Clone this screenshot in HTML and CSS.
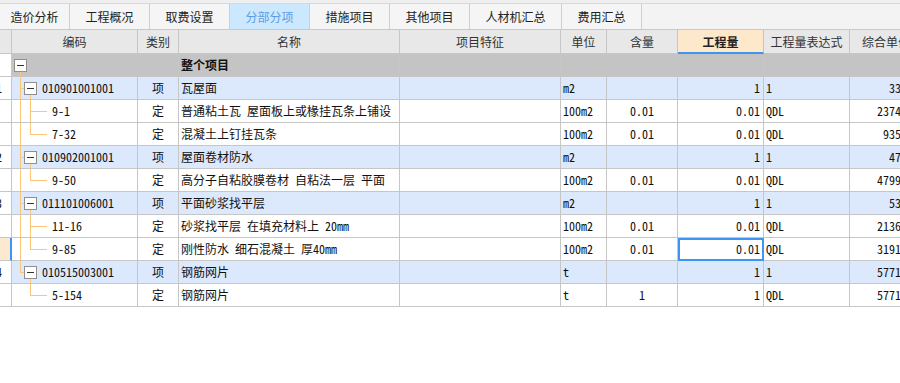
FILE: index.html
```html
<!DOCTYPE html>
<html lang="zh-CN">
<head>
    <meta charset="UTF-8">
    <title>分部分项</title>
    <link rel="stylesheet" href="styles.css">
</head>
<body>

    <!-- Tabs -->
    <div class="tabs">
        <div class="tab-strip">
            <div class="tab first">造价分析</div>
            <div class="tab">工程概况</div>
            <div class="tab">取费设置</div>
            <div class="tab active">分部分项</div>
            <div class="tab">措施项目</div>
            <div class="tab">其他项目</div>
            <div class="tab wide">人材机汇总</div>
            <div class="tab">费用汇总</div>
        </div>
    </div>

    <!-- Grid -->
    <div class="grid">
        <div class="row head">
            <div class="c idx"></div>
            <div class="c">编码</div>
            <div class="c">类别</div>
            <div class="c">名称</div>
            <div class="c">项目特征</div>
            <div class="c">单位</div>
            <div class="c">含量</div>
            <div class="c sorted">工程量</div>
            <div class="c">工程量表达式</div>
            <div class="c">综合单价</div>
        </div>

        <div class="row root">
            <div class="c idx"></div>
            <div class="c code">
                <span class="box root-box"></span>
                <span class="t-root start"></span>
            </div>
            <div class="c kind"></div>
            <div class="c name"><b>整个项目</b></div>
            <div class="c"></div>
            <div class="c"></div>
            <div class="c"></div>
            <div class="c"></div>
            <div class="c"></div>
            <div class="c"></div>
        </div>

        <div class="row item">
            <div class="c idx">1</div>
            <div class="c code">
                <span class="t-root"></span><span class="t-link"></span>
                <span class="box item-box"></span><span class="t-kid start"></span>
                <span class="txt">010901001001</span>
            </div>
            <div class="c kind">项</div>
            <div class="c name">瓦屋面</div>
            <div class="c"></div>
            <div class="c unit">m2</div>
            <div class="c qty"></div>
            <div class="c amt">1</div>
            <div class="c expr">1</div>
            <div class="c price">33.09</div>
        </div>
        <div class="row sub">
            <div class="c idx"></div>
            <div class="c code">
                <span class="t-root"></span><span class="t-kid"></span><span class="t-leaf"></span>
                <span class="txt">9-1</span>
            </div>
            <div class="c kind">定</div>
            <div class="c name">普通粘土瓦 屋面板上或椽挂瓦条上铺设</div>
            <div class="c"></div>
            <div class="c unit">100m2</div>
            <div class="c qty">0.01</div>
            <div class="c amt">0.01</div>
            <div class="c expr">QDL</div>
            <div class="c price">2374.05</div>
        </div>
        <div class="row sub">
            <div class="c idx"></div>
            <div class="c code">
                <span class="t-root"></span><span class="t-kid end"></span><span class="t-leaf"></span>
                <span class="txt">7-32</span>
            </div>
            <div class="c kind">定</div>
            <div class="c name">混凝土上钉挂瓦条</div>
            <div class="c"></div>
            <div class="c unit">100m2</div>
            <div class="c qty">0.01</div>
            <div class="c amt">0.01</div>
            <div class="c expr">QDL</div>
            <div class="c price">935.12</div>
        </div>

        <div class="row item">
            <div class="c idx">2</div>
            <div class="c code">
                <span class="t-root"></span><span class="t-link"></span>
                <span class="box item-box"></span><span class="t-kid start"></span>
                <span class="txt">010902001001</span>
            </div>
            <div class="c kind">项</div>
            <div class="c name">屋面卷材防水</div>
            <div class="c"></div>
            <div class="c unit">m2</div>
            <div class="c qty"></div>
            <div class="c amt">1</div>
            <div class="c expr">1</div>
            <div class="c price">47.99</div>
        </div>
        <div class="row sub">
            <div class="c idx"></div>
            <div class="c code">
                <span class="t-root"></span><span class="t-kid end"></span><span class="t-leaf"></span>
                <span class="txt">9-50</span>
            </div>
            <div class="c kind">定</div>
            <div class="c name">高分子自粘胶膜卷材 自粘法一层 平面</div>
            <div class="c"></div>
            <div class="c unit">100m2</div>
            <div class="c qty">0.01</div>
            <div class="c amt">0.01</div>
            <div class="c expr">QDL</div>
            <div class="c price">4799.46</div>
        </div>

        <div class="row item">
            <div class="c idx">3</div>
            <div class="c code">
                <span class="t-root"></span><span class="t-link"></span>
                <span class="box item-box"></span><span class="t-kid start"></span>
                <span class="txt">011101006001</span>
            </div>
            <div class="c kind">项</div>
            <div class="c name">平面砂浆找平层</div>
            <div class="c"></div>
            <div class="c unit">m2</div>
            <div class="c qty"></div>
            <div class="c amt">1</div>
            <div class="c expr">1</div>
            <div class="c price">53.27</div>
        </div>
        <div class="row sub">
            <div class="c idx"></div>
            <div class="c code">
                <span class="t-root"></span><span class="t-kid"></span><span class="t-leaf"></span>
                <span class="txt">11-16</span>
            </div>
            <div class="c kind">定</div>
            <div class="c name">砂浆找平层 在填充材料上 20mm</div>
            <div class="c"></div>
            <div class="c unit">100m2</div>
            <div class="c qty">0.01</div>
            <div class="c amt">0.01</div>
            <div class="c expr">QDL</div>
            <div class="c price">2136.28</div>
        </div>
        <div class="row sub">
            <div class="c idx current"></div>
            <div class="c code">
                <span class="t-root"></span><span class="t-kid end"></span><span class="t-leaf"></span>
                <span class="txt">9-85</span>
            </div>
            <div class="c kind">定</div>
            <div class="c name">刚性防水 细石混凝土 厚40mm</div>
            <div class="c"></div>
            <div class="c unit">100m2</div>
            <div class="c qty">0.01</div>
            <div class="c amt selected">0.01</div>
            <div class="c expr">QDL</div>
            <div class="c price">3191.07</div>
        </div>

        <div class="row item">
            <div class="c idx">4</div>
            <div class="c code">
                <span class="t-root end"></span><span class="t-link"></span>
                <span class="box item-box"></span><span class="t-kid start"></span>
                <span class="txt">010515003001</span>
            </div>
            <div class="c kind">项</div>
            <div class="c name">钢筋网片</div>
            <div class="c"></div>
            <div class="c unit">t</div>
            <div class="c qty"></div>
            <div class="c amt">1</div>
            <div class="c expr">1</div>
            <div class="c price">5771.30</div>
        </div>
        <div class="row sub">
            <div class="c idx"></div>
            <div class="c code">
                <span class="t-kid end"></span><span class="t-leaf"></span>
                <span class="txt">5-154</span>
            </div>
            <div class="c kind">定</div>
            <div class="c name">钢筋网片</div>
            <div class="c"></div>
            <div class="c unit">t</div>
            <div class="c qty">1</div>
            <div class="c amt">1</div>
            <div class="c expr">QDL</div>
            <div class="c price">5771.30</div>
        </div>
    </div>

</body>
</html>
```

FILE: styles.css
```css
* {
    box-sizing: border-box;
    margin: 0;
    padding: 0;
}

body {
    width: 900px;
    height: 383px;
    overflow: hidden;
    background: #fff;
    font-family: "Noto Sans CJK SC", sans-serif;
    font-size: 12px;
    color: #222;
}

/* Tabs */
.tabs {
    height: 30px;
    padding-top: 3px;
    background: #efefef;
    border-bottom: 1px solid #c9c9c9;
}

.tab-strip {
    display: flex;
    height: 26px;
    border-top: 1px solid #d9d9d9;
    background: #f3f3f3;
}

.tab {
    width: 80px;
    line-height: 25px;
    text-align: center;
    background: #f5f5f5;
    border-right: 1px solid #cfcfcf;
    color: #222;
}

.tab.first {
    width: 70px;
}

.tab.wide {
    width: 92px;
}

.tab.active {
    background: #cce8ff;
    color: #5b9de4;
}

/* Grid */
.grid {
    width: 923px;
}

.row {
    display: grid;
    grid-template-columns: 12px 126px 41px 221px 161px 46px 71px 86px 86px 73px;
    height: 23px;
}

.c {
    position: relative;
    padding: 0 2px;
    border-right: 1px solid #c6c6c6;
    border-bottom: 1px solid #c6c6c6;
    line-height: 22px;
    white-space: nowrap;
    overflow: hidden;
    font-family: "Noto Sans Mono CJK SC", "Noto Sans CJK SC", monospace;
    color: #111;
}

.head {
    height: 24px;
    background: #e8e8e8;
}

.head .c {
    line-height: 23px;
    text-align: center;
    font-family: "Noto Sans CJK SC", sans-serif;
    color: #333;
}

.head .sorted {
    background: #fee8cc;
    border-bottom: 2px solid #3f94ef;
    font-weight: bold;
    color: #222;
}

.root .c {
    background: #c4c4c4;
}

.item .c {
    background: #dce8fb;
}

/* row numbers are scrolled, only their right edge shows */
.row .idx {
    padding: 0;
    text-indent: -4px;
    background: #fff;
}

.head .idx {
    background: #e8e8e8;
}

.idx.current {
    background: #fde9cf;
    border-right: 2px solid #3c95f4;
}

.kind {
    text-align: center;
}

.name b {
    font-family: "Noto Sans CJK SC", sans-serif;
}

.qty {
    text-align: center;
}

.amt,
.price {
    text-align: right;
    padding-right: 3px;
}

.amt.selected {
    outline: 2px solid #3d95f4;
    outline-offset: -2px;
}

/* Tree */
.code .txt {
    padding-left: 28px;
}

.sub .code .txt {
    padding-left: 38px;
}

.box {
    position: absolute;
    top: 5px;
    width: 13px;
    height: 13px;
    border: 1px solid #8f8f8f;
    background: #fff;
}

.box::after {
    content: "";
    position: absolute;
    left: 2px;
    top: 5px;
    width: 7px;
    height: 1px;
    background: #333;
}

.root-box {
    left: 2px;
}

.item-box {
    left: 12px;
}

.t-root,
.t-kid {
    position: absolute;
    top: 0;
    bottom: -1px;
    width: 1px;
    background: #fcc677;
}

.t-root {
    left: 8px;
}

.t-kid {
    left: 18px;
}

.t-root.start,
.t-kid.start {
    top: 18px;
}

.t-root.end,
.t-kid.end {
    bottom: auto;
    height: 12px;
}

.t-link,
.t-leaf {
    position: absolute;
    top: 11px;
    height: 1px;
    background: #fcc677;
}

.t-link {
    left: 9px;
    width: 3px;
}

.t-leaf {
    left: 19px;
    width: 16px;
}
```
